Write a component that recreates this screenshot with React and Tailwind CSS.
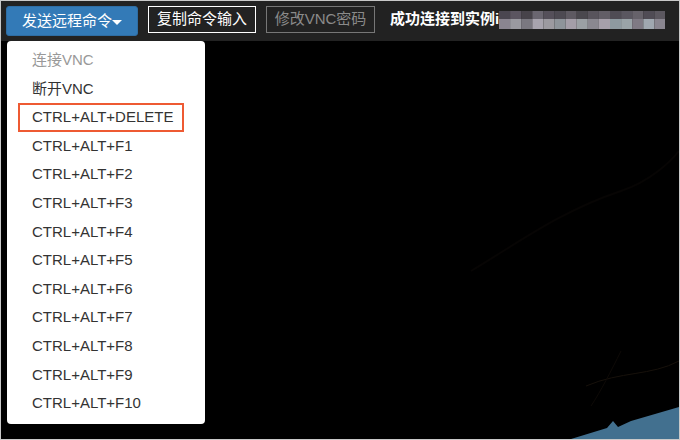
import { useState } from "react";

const items = [
    "断开VNC",
    "CTRL+ALT+DELETE",
    "CTRL+ALT+F1",
    "CTRL+ALT+F2",
    "CTRL+ALT+F3",
    "CTRL+ALT+F4",
    "CTRL+ALT+F5",
    "CTRL+ALT+F6",
    "CTRL+ALT+F7",
    "CTRL+ALT+F8",
    "CTRL+ALT+F9",
    "CTRL+ALT+F10",
];

// pixelated (masked) instance id
const blurTop = ["#4a4650", "#5b5560", "#47434a", "#6a6670", "#55505a", "#4d4a52", "#5e5a62", "#4a484e", "#58545c", "#625e66", "#4f4c54", "#5a5760", "#66626a", "#504c55", "#5c5860"];
const blurBottom = ["#8a8590", "#9a9aa0", "#7a7880", "#a8a4ae", "#9c9aa0", "#8e949a", "#a49ea8", "#9ba0a4", "#8a8890", "#a6a0aa", "#8e9aa0", "#9aa4a8", "#7f7a84", "#a0a8b0", "#8a8690"];

function Masked() {
    return (
        <svg width="166" height="18" className="block">
            {blurTop.map((c, i) => (
                <rect key={"t" + i} x={i * 11.1} y="0" width="11.1" height="8" fill={c} />
            ))}
            {blurBottom.map((c, i) => (
                <rect key={"b" + i} x={i * 11.1} y="8" width="11.1" height="10" fill={c} />
            ))}
        </svg>
    );
}

export default function App() {
    const [open] = useState(true);

    return (
        <div className="w-[680px] h-[440px] border border-[#c9c9c9] bg-black flex flex-col relative overflow-hidden font-['Liberation_Sans','Noto_Sans_CJK_SC',sans-serif] text-[15px]">
            <div className="h-[40px] bg-[#222222] flex items-start pt-[5px] pl-[5px] gap-[10px] shrink-0">
                <button className="h-[30px] w-[132px] rounded-[3px] bg-[#337ab7] border border-[#2e6da4] text-white flex items-center justify-center">
                    发送远程命令
                    <span className="mt-[2px] w-0 h-0 border-l-[5px] border-r-[5px] border-t-[5px] border-l-transparent border-r-transparent border-t-white"></span>
                </button>
                <button className="h-[27px] w-[108px] border border-white text-white flex items-center justify-center">
                    复制命令输入
                </button>
                <button className="h-[27px] w-[109px] border border-[#777777] text-[#8a8a8a] flex items-center justify-center">
                    修改VNC密码
                </button>
                <div className="h-[27px] flex items-center ml-[5px] text-white font-bold">
                    成功连接到实例i
                    <Masked />
                </div>
            </div>

            <div className="flex-1 relative">
                <svg className="absolute inset-0 w-full h-full" viewBox="0 0 678 398" preserveAspectRatio="none">
                    <path d="M470 230 C520 200 560 170 620 150 C650 140 670 120 678 110" stroke="#070504" strokeWidth="2" fill="none" />
                    <path d="M585 345 C620 330 650 335 678 320" stroke="#17110b" strokeWidth="1" fill="none" />
                    <path d="M620 310 C610 330 600 350 590 365" stroke="#0e0a07" strokeWidth="1" fill="none" />
                    <path d="M570 398 L606 387 L612 380 L617 386 L630 380 L678 366 L678 398 Z" fill="#42708f" />
                </svg>
            </div>

            {open && (
                <div className="absolute left-[6px] top-[40px] w-[198px] h-[383px] bg-white rounded-[4px] pt-[5px] text-[#333333]">
                    <div className="h-[28.6px] flex items-center pl-[25px] text-[#999999]">连接VNC</div>
                    {items.map((label) =>
                        label === "CTRL+ALT+DELETE" ? (
                            <div key={label} className="h-[28.6px] flex items-center pl-[11px]">
                                <span className="w-[166px] h-[29px] border-2 border-[#ee5a33] flex items-center pl-[12px]">
                                    {label}
                                </span>
                            </div>
                        ) : (
                            <div key={label} className="h-[28.6px] flex items-center pl-[25px]">
                                {label}
                            </div>
                        )
                    )}
                </div>
            )}
        </div>
    );
}
